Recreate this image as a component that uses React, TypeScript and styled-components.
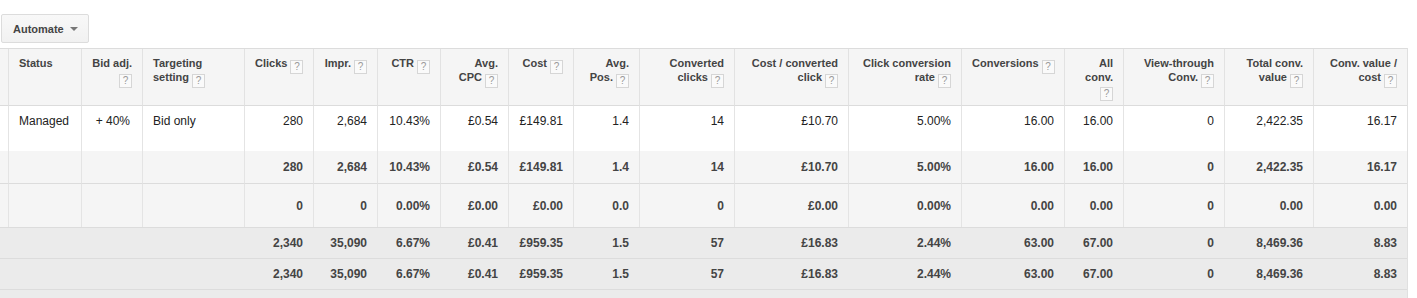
import React from "react";
import styled, { createGlobalStyle } from "styled-components";

const Global = createGlobalStyle`
  html, body { margin: 0; padding: 0; background: #fff; }
  body { font-family: Arial, "Liberation Sans", sans-serif; }
`;

const Page = styled.div`
  padding-top: 14px;
  width: 1417px;
`;

const Toolbar = styled.div`
  display: flex;
  padding-left: 1px;
  margin-bottom: 5px;
`;

const Button = styled.button`
  display: flex;
  align-items: center;
  gap: 6px;
  height: 29px;
  width: 88px;
  box-sizing: border-box;
  padding: 0 0 0 11px;
  border: 1px solid #dcdcdc;
  border-radius: 2px;
  background: linear-gradient(#f8f8f8, #f1f1f1);
  font-family: Arial, "Liberation Sans", sans-serif;
  font-weight: bold;
  font-size: 11px;
  color: #444;
`;

const Caret = styled.span`
  width: 0;
  height: 0;
  border-left: 4px solid transparent;
  border-right: 4px solid transparent;
  border-top: 4px solid #777;
  margin-top: 1px;
`;

const Table = styled.table`
  table-layout: fixed;
  width: 1407px;
  border-collapse: separate;
  border-spacing: 0;
  border-top: 1px solid #dcdcdc;
  border-right: 1px solid #e0e0e0;
  font-family: Arial, "Liberation Sans", sans-serif;
`;

const Th = styled.th<{ $left?: boolean; $first?: boolean }>`
  box-sizing: border-box;
  background: #f5f5f5;
  border-left: ${(p) => (p.$first ? "none" : "1px solid #e2e2e2")};
  border-bottom: 1px solid #dcdcdc;
  height: 57px;
  vertical-align: top;
  padding: 8px 10px 0 10px;
  text-align: ${(p) => (p.$left ? "left" : "right")};
  font-size: 11px;
  line-height: 13.5px;
  font-weight: bold;
  color: #444;
  white-space: nowrap;
`;

const Help = styled.span`
  display: inline-block;
  box-sizing: border-box;
  width: 13px;
  height: 14px;
  margin-left: 3px;
  border: 1px solid #d6d6d6;
  background: #fafafa;
  color: #999;
  font-size: 10px;
  font-weight: normal;
  line-height: 12px;
  text-align: center;
  vertical-align: -3px;
`;

type Kind = "main" | "sub" | "total";

const Tr = styled.tr<{ $kind: Kind; $h: number }>`
  height: ${(p) => p.$h}px;
  background: ${(p) => (p.$kind === "main" ? "#fff" : p.$kind === "sub" ? "#f5f5f5" : "#ebebeb")};
`;

const Td = styled.td<{ $kind: Kind; $left?: boolean; $first?: boolean; $top?: boolean; $line?: boolean }>`
  box-sizing: border-box;
  padding: ${(p) => (p.$top ? "7px" : "0")} 10px 0 ${(p) => (p.$left ? "10px" : "4px")};
  vertical-align: ${(p) => (p.$top ? "top" : "middle")};
  text-align: ${(p) => (p.$left ? "left" : "right")};
  border-left: ${(p) => (p.$first || p.$kind === "total" ? "none" : "1px solid #e4e4e4")};
  border-top: ${(p) => (p.$line ? "1px solid #dcdcdc" : "none")};
  font-size: 12px;
  line-height: 16px;
  font-weight: ${(p) => (p.$kind === "main" ? "normal" : "bold")};
  color: ${(p) => (p.$kind === "main" ? "#222" : "#444")};
  white-space: nowrap;
`;

const widths = [8, 73, 61, 102, 69, 64, 63, 68, 65, 66, 95, 114, 113, 103, 59, 101, 89, 94];

type Head = { lines: string[]; help: "inline" | "own" | "none"; left?: boolean };

const heads: Head[] = [
  { lines: [""], help: "none" },
  { lines: ["Status"], help: "none", left: true },
  { lines: ["Bid adj."], help: "own" },
  { lines: ["Targeting", "setting"], help: "inline", left: true },
  { lines: ["Clicks"], help: "inline" },
  { lines: ["Impr."], help: "inline" },
  { lines: ["CTR"], help: "inline" },
  { lines: ["Avg.", "CPC"], help: "inline" },
  { lines: ["Cost"], help: "inline" },
  { lines: ["Avg.", "Pos."], help: "inline" },
  { lines: ["Converted", "clicks"], help: "inline" },
  { lines: ["Cost / converted", "click"], help: "inline" },
  { lines: ["Click conversion", "rate"], help: "inline" },
  { lines: ["Conversions"], help: "inline" },
  { lines: ["All", "conv."], help: "own" },
  { lines: ["View-through", "Conv."], help: "inline" },
  { lines: ["Total conv.", "value"], help: "inline" },
  { lines: ["Conv. value /", "cost"], help: "inline" },
];

const metrics1 = ["280", "2,684", "10.43%", "£0.54", "£149.81", "1.4", "14", "£10.70", "5.00%", "16.00", "16.00", "0", "2,422.35", "16.17"];
const metrics0 = ["0", "0", "0.00%", "£0.00", "£0.00", "0.0", "0", "£0.00", "0.00%", "0.00", "0.00", "0", "0.00", "0.00"];
const metricsT = ["2,340", "35,090", "6.67%", "£0.41", "£959.35", "1.5", "57", "£16.83", "2.44%", "63.00", "67.00", "0", "8,469.36", "8.83"];

type Row = { kind: Kind; h: number; top?: boolean; line?: boolean; cells: string[] };

const rows: Row[] = [
  { kind: "main", h: 45, top: true, cells: ["", "Managed", "+ 40%", "Bid only", ...metrics1] },
  { kind: "sub", h: 32, cells: ["", "", "", "", ...metrics1] },
  { kind: "sub", h: 44, line: true, cells: ["", "", "", "", ...metrics0] },
  { kind: "total", h: 31, line: true, cells: ["", "", "", "", ...metricsT] },
  { kind: "total", h: 31, line: true, cells: ["", "", "", "", ...metricsT] },
  { kind: "total", h: 20, line: true, cells: Array(18).fill("") },
];

export default function App() {
  return (
    <Page>
      <Global />
      <Toolbar>
        <Button>
          Automate
          <Caret />
        </Button>
      </Toolbar>
      <Table>
        <colgroup>
          {widths.map((w, i) => (
            <col key={i} style={{ width: w }} />
          ))}
        </colgroup>
        <thead>
          <tr>
            {heads.map((h, i) => (
              <Th key={i} $left={h.left} $first={i === 0}>
                {h.lines.map((l, j) => (
                  <React.Fragment key={j}>
                    {j > 0 && <br />}
                    {l}
                    {h.help === "inline" && j === h.lines.length - 1 && <Help>?</Help>}
                  </React.Fragment>
                ))}
                {h.help === "own" && (
                  <>
                    <br />
                    <Help>?</Help>
                  </>
                )}
              </Th>
            ))}
          </tr>
        </thead>
        <tbody>
          {rows.map((r, ri) => (
            <Tr key={ri} $kind={r.kind} $h={r.h}>
              {r.cells.map((c, ci) => (
                <Td
                  key={ci}
                  $kind={r.kind}
                  $first={ci === 0}
                  $left={ci === 1 || ci === 3}
                  $top={r.top}
                  $line={r.line}
                  style={ci === 2 ? { paddingRight: 12 } : undefined}
                >
                  {c}
                </Td>
              ))}
            </Tr>
          ))}
        </tbody>
      </Table>
    </Page>
  );
}
